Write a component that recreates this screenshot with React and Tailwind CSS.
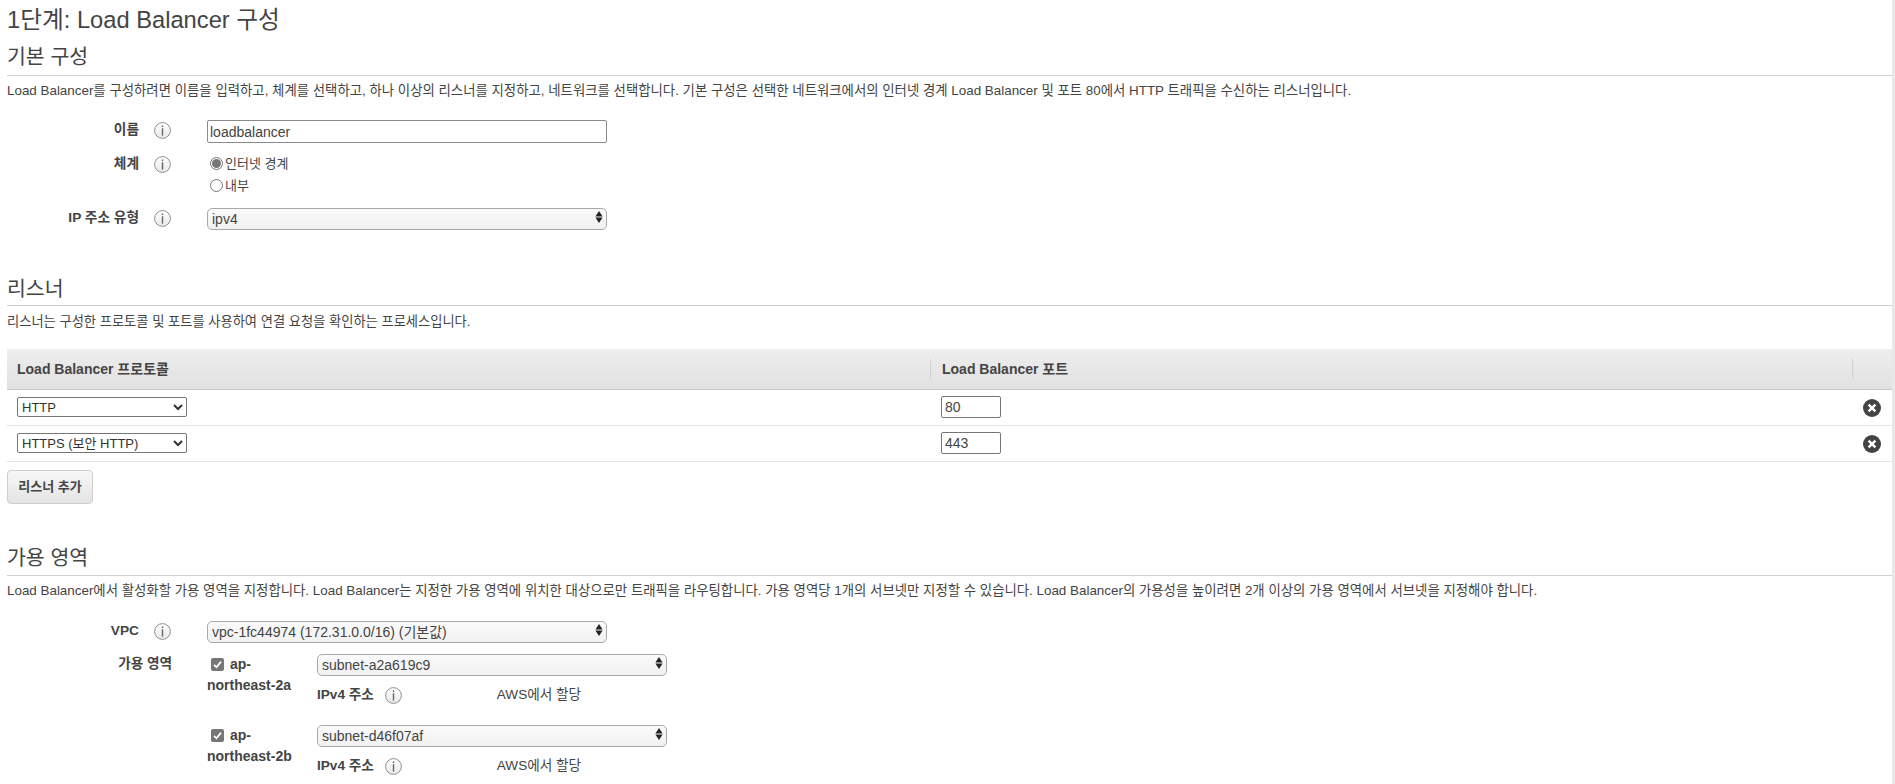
const FONT = "font-['Liberation_Sans','Noto_Sans_CJK_KR',sans-serif]";

function Info() {
  return (
    <svg width="17" height="17" viewBox="0 0 17 17" className="shrink-0">
      <defs>
        <linearGradient id="infoBg" x1="0" y1="0" x2="0" y2="1">
          <stop offset="0" stopColor="#ffffff" />
          <stop offset="1" stopColor="#e9e9e9" />
        </linearGradient>
      </defs>
      <circle cx="8.5" cy="8.5" r="7.9" fill="url(#infoBg)" stroke="#8f8f8f" strokeWidth="1" />
      <rect x="7.8" y="3.4" width="1.4" height="1.6" fill="#666" />
      <rect x="7.8" y="6.2" width="1.4" height="7.4" fill="#666" />
    </svg>
  );
}

function StackSelect({ value, className }) {
  return (
    <div className={`relative ${className}`}>
      <select
        defaultValue={value}
        className="block h-full w-full appearance-none rounded-[5px] border border-[#a9a9a9] bg-gradient-to-b from-[#fafafa] to-[#f1f1f1] pl-[4px] pr-5 text-[14px] text-[#444]"
      >
        <option>{value}</option>
      </select>
      <svg width="8" height="12" viewBox="0 0 8 12" className="pointer-events-none absolute right-[4px] top-[3px]">
        <path d="M4 0 L7.6 5.4 H0.4 Z" fill="#222" />
        <path d="M4 12 L7.6 6.6 H0.4 Z" fill="#222" />
      </svg>
    </div>
  );
}

function Radio({ checked, label }) {
  return (
    <div className="flex h-[21.5px] items-center pl-[3px]">
      <span className="flex h-[13px] w-[13px] items-center justify-center rounded-full border border-[#777] bg-white">
        {checked && <span className="h-[9px] w-[9px] rounded-full bg-[#777]" />}
      </span>
      <span className="ml-[2px] text-[13px] text-[#444]">{label}</span>
    </div>
  );
}

function Check() {
  return (
    <span className="inline-flex h-[13px] w-[13px] items-center justify-center rounded-[2px] bg-[#767676] align-[-1px]">
      <svg width="11" height="11" viewBox="0 0 11 11">
        <path d="M2 5.8 L4.5 8.3 L9 2.6" fill="none" stroke="#fff" strokeWidth="1.7" />
      </svg>
    </span>
  );
}

function Section({ title, desc, descSize, headLeading, descGap, className, children }) {
  return (
    <section className={className}>
      <h2 className={`h-[38px] border-b border-[#cfcfcf] text-[20.5px] text-[#444] ${headLeading}`}>{title}</h2>
      <p className={`leading-[16px] text-[#444] ${descGap} ${descSize}`}>{desc}</p>
      {children}
    </section>
  );
}

function FieldRow({ label, className, children }) {
  return (
    <div className={`flex items-start ${className}`}>
      <div className="flex w-[193px] shrink-0 items-center">
        <span className="w-[132px] text-right text-[13.7px] font-bold text-[#444]">{label}</span>
        <span className="ml-[15px]"><Info /></span>
      </div>
      <div className="ml-[7px]">{children}</div>
    </div>
  );
}

function X() {
  return (
    <svg width="18" height="18" viewBox="0 0 18 18">
      <circle cx="9" cy="9" r="9" fill="#444" />
      <path d="M5.6 5.6 L12.4 12.4 M12.4 5.6 L5.6 12.4" stroke="#fff" strokeWidth="2.4" />
    </svg>
  );
}

function ListenerRow({ proto, port }) {
  return (
    <div className="flex h-[36px] items-center border-b border-[#e1e1e1] pb-[1px]">
      <div className="w-[923px] pl-[10px]">
        <select defaultValue={proto} className="block h-[20px] w-[170px] rounded-[2px] border border-[#767676] bg-white text-[13px] text-[#333]">
          <option>{proto}</option>
        </select>
      </div>
      <div className="flex-1 pl-[11px]">
        <input defaultValue={port} className="block h-[22px] w-[60px] rounded-[2px] border border-[#767676] px-[3px] text-[14px] text-[#444]" />
      </div>
      <div className="mr-[11px] mt-[2px]"><X /></div>
    </div>
  );
}

function Subnet({ az, subnet, className }) {
  return (
    <div className={`flex items-start ${className}`}>
      <div className="w-[110px] text-[14px] font-bold leading-[21px] text-[#444]">
        <span className="pl-[4px]"><Check /></span> <span className="ml-[2px]">ap-</span><br />
        <span>{az}</span>
      </div>
      <div>
        <StackSelect value={subnet} className="h-[22px] w-[350px]" />
        <div className="mt-[8px] flex h-[22px] items-center text-[13.6px]">
          <span className="font-bold text-[#444]">IPv4 주소</span>
          <span className="ml-[11px]"><Info /></span>
          <span className="ml-[95px] text-[#444]">AWS에서 할당</span>
        </div>
      </div>
    </div>
  );
}

export default function App() {
  return (
    <div className={`${FONT} h-[784px] overflow-hidden border-r-[3px] border-[#e8e8e8] bg-white pl-[7px] text-[#444]`}>
      <h1 className="pt-[6px] text-[23.7px] leading-[28px] text-[#444]">1단계: Load Balancer 구성</h1>

      <Section
        title="기본 구성"
        descSize="text-[13.4px]"
        headLeading="leading-[38px]"
        descGap="mt-[7px]"
        desc="Load Balancer를 구성하려면 이름을 입력하고, 체계를 선택하고, 하나 이상의 리스너를 지정하고, 네트워크를 선택합니다. 기본 구성은 선택한 네트워크에서의 인터넷 경계 Load Balancer 및 포트 80에서 HTTP 트래픽을 수신하는 리스너입니다."
        className="mt-[4px]"
      >
        <FieldRow label="이름" className="mt-[21px] h-[23px] items-center">
          <input defaultValue="loadbalancer" className="block h-[23px] w-[400px] rounded-[2px] border border-[#8a8a8a] px-[2px] text-[14px] text-[#444]" />
        </FieldRow>
        <FieldRow label="체계" className="mt-[11px]">
          <div className="-mt-[1px]">
            <Radio checked label="인터넷 경계" />
            <Radio label="내부" />
          </div>
        </FieldRow>
        <FieldRow label="IP 주소 유형" className="mt-[12px] items-center">
          <StackSelect value="ipv4" className="h-[22px] w-[400px]" />
        </FieldRow>
      </Section>

      <Section
        title="리스너"
        descSize="text-[13.25px]"
        headLeading="leading-[41px]"
        descGap="mt-[8px]"
        desc="리스너는 구성한 프로토콜 및 포트를 사용하여 연결 요청을 확인하는 프로세스입니다."
        className="mt-[38px]"
      >
        <div className="mt-[19px]">
          <div className="flex h-[41px] items-center border-b border-[#c8c8c8] bg-gradient-to-b from-[#eeeeee] to-[#e1e1e1] text-[14px] font-bold text-[#444]">
            <div className="w-[924px] border-r border-[#d0d0d0] pl-[10px] leading-[20px]">Load Balancer 프로토콜</div>
            <div className="w-[922px] border-r border-[#d0d0d0] pl-[11px] leading-[20px]">Load Balancer 포트</div>
          </div>
          <ListenerRow proto="HTTP" port="80" />
          <ListenerRow proto="HTTPS (보안 HTTP)" port="443" />
        </div>
        <button className="mt-[8px] block h-[34px] w-[86px] rounded-[4px] border border-[#cfcfcf] bg-gradient-to-b from-[#f7f7f7] to-[#e4e4e4] text-[13px] font-bold text-[#444]">
          리스너 추가
        </button>
      </Section>

      <Section
        title="가용 영역"
        descSize="text-[13.4px]"
        headLeading="leading-[40px]"
        descGap="mt-[7px]"
        desc="Load Balancer에서 활성화할 가용 영역을 지정합니다. Load Balancer는 지정한 가용 영역에 위치한 대상으로만 트래픽을 라우팅합니다. 가용 영역당 1개의 서브넷만 지정할 수 있습니다. Load Balancer의 가용성을 높이려면 2개 이상의 가용 영역에서 서브넷을 지정해야 합니다."
        className="mt-[34px]"
      >
        <FieldRow label="VPC" className="mt-[22px] items-center">
          <StackSelect value="vpc-1fc44974 (172.31.0.0/16) (기본값)" className="h-[22px] w-[400px]" />
        </FieldRow>
        <div className="mt-[11px] flex items-start">
          <div className="w-[165px] shrink-0 pt-[1px] text-right text-[13.6px] font-bold leading-[18px] text-[#444]">가용 영역</div>
          <div className="ml-[35px]">
            <Subnet az="northeast-2a" subnet="subnet-a2a619c9" />
            <Subnet az="northeast-2b" subnet="subnet-d46f07af" className="mt-[19px]" />
          </div>
        </div>
      </Section>
    </div>
  );
}
